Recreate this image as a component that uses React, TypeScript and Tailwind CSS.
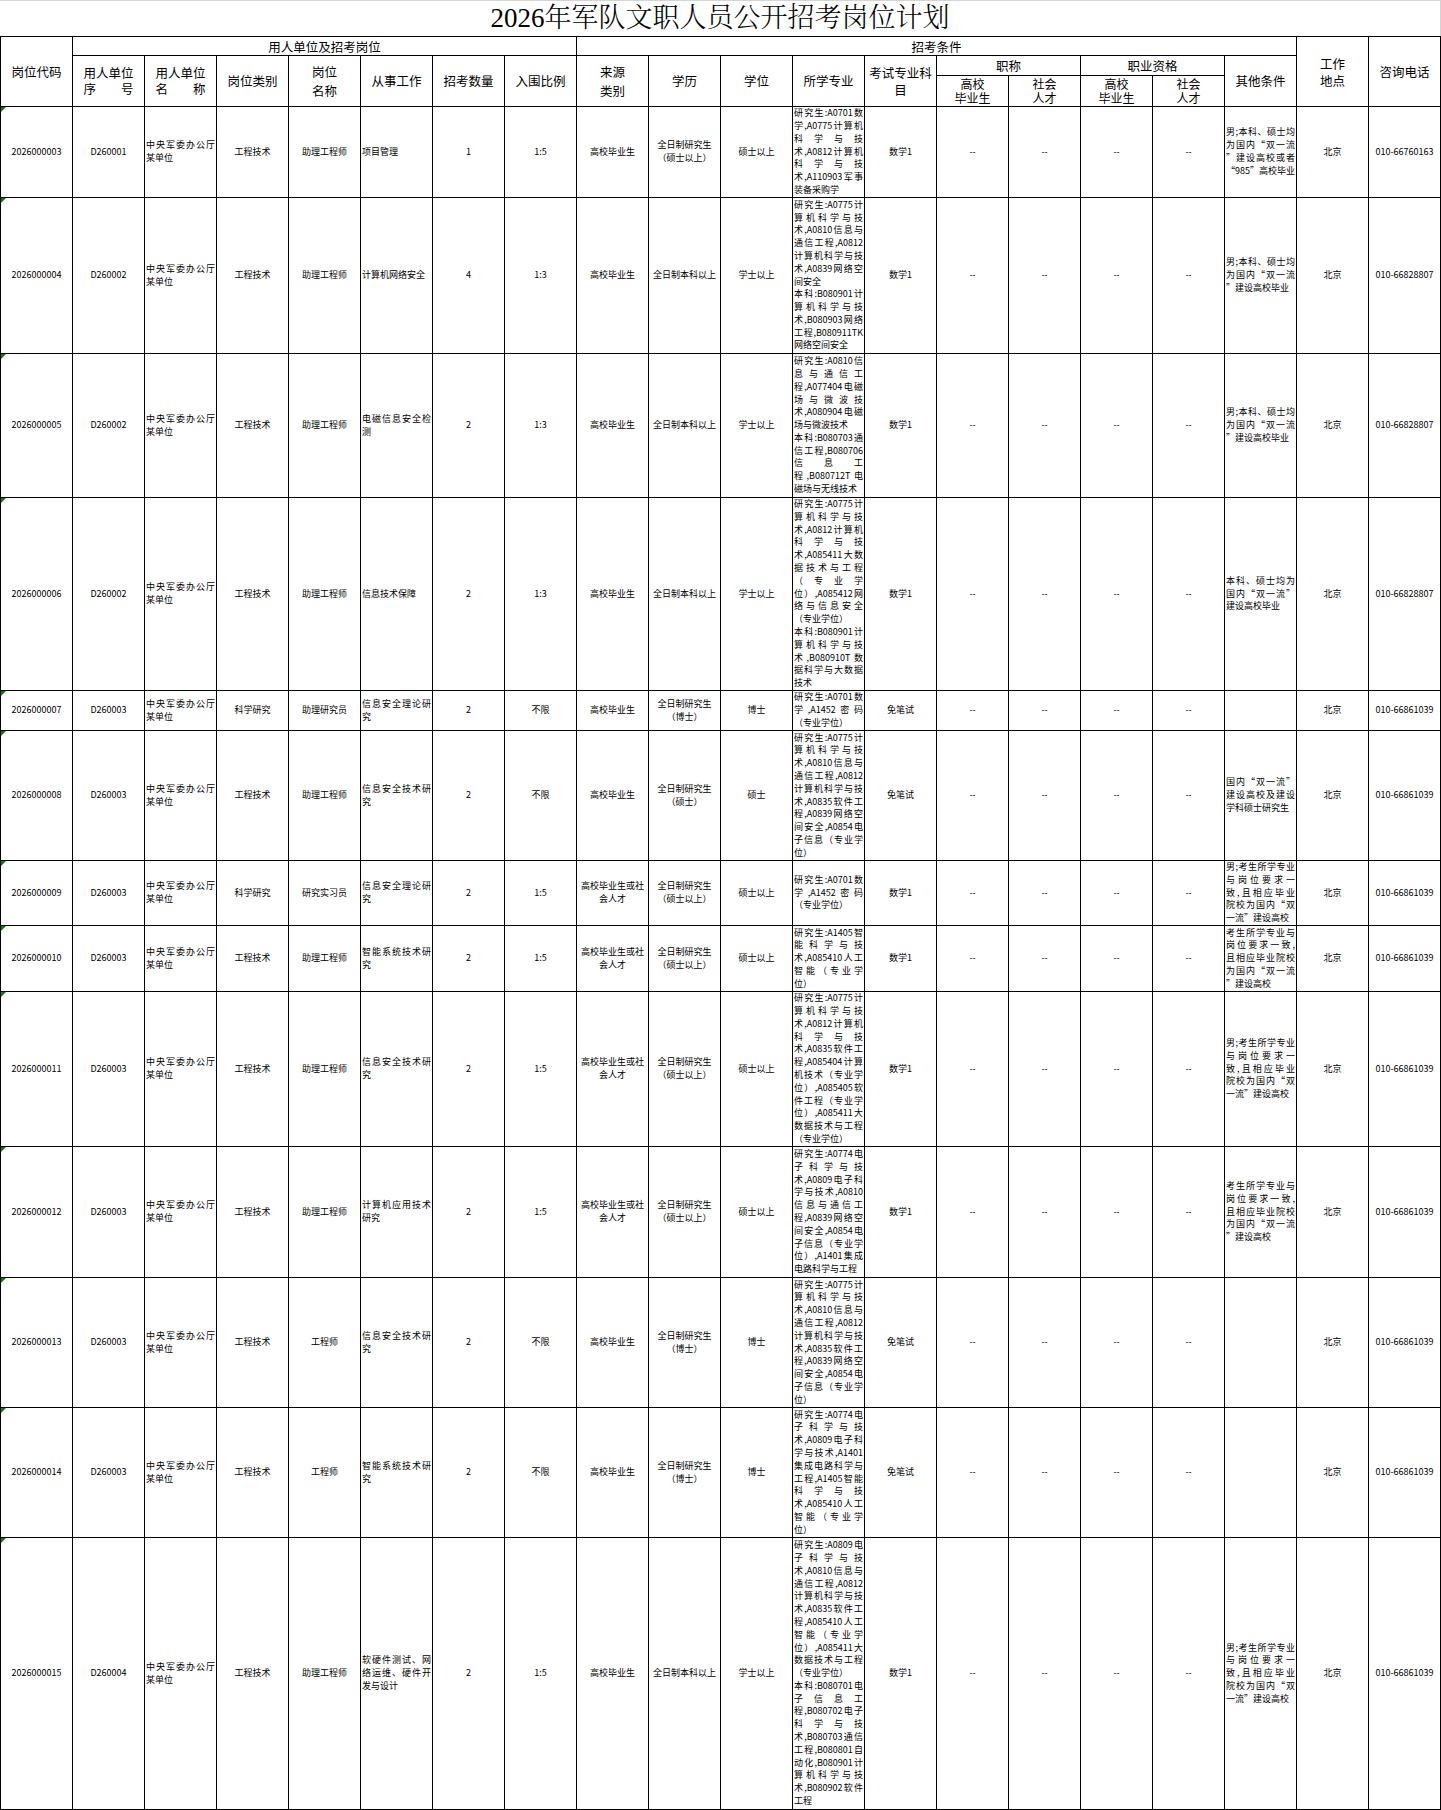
import React from "react";

type Row = {
  code: string;
  seq: string;
  kind: string;
  post: string;
  work: string[];
  num: string;
  ratio: string;
  source: string[];
  edu: string[];
  degree: string;
  major: string[][];
  exam: string;
  other: string[];
  phone: string;
};

const U = ["中央军委办公厅", "某单位"];
const E1 = ["全日制研究生", "（硕士以上）"];
const EB = ["全日制本科以上"];
const ED = ["全日制研究生", "（博士）"];
const EM = ["全日制研究生", "（硕士）"];
const S1 = ["高校毕业生"];
const S2 = ["高校毕业生或社", "会人才"];
const O2 = ["男;本科、硕士均", "为国内“双一流", "”建设高校毕业"];
const O7 = ["男;考生所学专业", "与岗位要求一", "致,且相应毕业", "院校为国内“双", "一流”建设高校"];
const O8 = ["考生所学专业与", "岗位要求一致,", "且相应毕业院校", "为国内“双一流", "”建设高校"];
const M6 = [
  [
    "研究生:A0775计",
    "算机科学与技",
    "术,A0810信息与",
    "通信工程,A0812",
    "计算机科学与技",
    "术,A0835软件工",
    "程,A0839网络空",
    "间安全,A0854电",
    "子信息（专业学",
    "位）",
  ],
];

const rows: Row[] = [
  {
    code: "2026000003", seq: "D260001", kind: "工程技术", post: "助理工程师", work: ["项目管理"],
    num: "1", ratio: "1:5", source: S1, edu: E1, degree: "硕士以上",
    major: [["研究生:A0701数", "学,A0775计算机", "科学与技", "术,A0812计算机", "科学与技", "术,A110903军事", "装备采购学"]],
    exam: "数学1", other: ["男;本科、硕士均", "为国内“双一流", "”建设高校或者", "“985”高校毕业"], phone: "010-66760163",
  },
  {
    code: "2026000004", seq: "D260002", kind: "工程技术", post: "助理工程师", work: ["计算机网络安全"],
    num: "4", ratio: "1:3", source: S1, edu: EB, degree: "学士以上",
    major: [
      ["研究生:A0775计", "算机科学与技", "术,A0810信息与", "通信工程,A0812", "计算机科学与技", "术,A0839网络空", "间安全"],
      ["本科:B080901计", "算机科学与技", "术,B080903网络", "工程,B080911TK", "网络空间安全"],
    ],
    exam: "数学1", other: O2, phone: "010-66828807",
  },
  {
    code: "2026000005", seq: "D260002", kind: "工程技术", post: "助理工程师", work: ["电磁信息安全检", "测"],
    num: "2", ratio: "1:3", source: S1, edu: EB, degree: "学士以上",
    major: [
      ["研究生:A0810信", "息与通信工", "程,A077404电磁", "场与微波技", "术,A080904电磁", "场与微波技术"],
      ["本科:B080703通", "信工程,B080706", "信息工", "程,B080712T电", "磁场与无线技术"],
    ],
    exam: "数学1", other: O2, phone: "010-66828807",
  },
  {
    code: "2026000006", seq: "D260002", kind: "工程技术", post: "助理工程师", work: ["信息技术保障"],
    num: "2", ratio: "1:3", source: S1, edu: EB, degree: "学士以上",
    major: [
      ["研究生:A0775计", "算机科学与技", "术,A0812计算机", "科学与技", "术,A085411大数", "据技术与工程", "（专业学", "位）,A085412网", "络与信息安全", "（专业学位）"],
      ["本科:B080901计", "算机科学与技", "术,B080910T数", "据科学与大数据", "技术"],
    ],
    exam: "数学1", other: ["本科、硕士均为", "国内“双一流”", "建设高校毕业"], phone: "010-66828807",
  },
  {
    code: "2026000007", seq: "D260003", kind: "科学研究", post: "助理研究员", work: ["信息安全理论研", "究"],
    num: "2", ratio: "不限", source: S1, edu: ED, degree: "博士",
    major: [["研究生:A0701数", "学,A1452密码", "（专业学位）"]],
    exam: "免笔试", other: [], phone: "010-66861039",
  },
  {
    code: "2026000008", seq: "D260003", kind: "工程技术", post: "助理工程师", work: ["信息安全技术研", "究"],
    num: "2", ratio: "不限", source: S1, edu: EM, degree: "硕士",
    major: M6,
    exam: "免笔试", other: ["国内“双一流”", "建设高校及建设", "学科硕士研究生"], phone: "010-66861039",
  },
  {
    code: "2026000009", seq: "D260003", kind: "科学研究", post: "研究实习员", work: ["信息安全理论研", "究"],
    num: "2", ratio: "1:5", source: S2, edu: E1, degree: "硕士以上",
    major: [["研究生:A0701数", "学,A1452密码", "（专业学位）"]],
    exam: "数学1", other: O7, phone: "010-66861039",
  },
  {
    code: "2026000010", seq: "D260003", kind: "工程技术", post: "助理工程师", work: ["智能系统技术研", "究"],
    num: "2", ratio: "1:5", source: S2, edu: E1, degree: "硕士以上",
    major: [["研究生:A1405智", "能科学与技", "术,A085410人工", "智能（专业学", "位）"]],
    exam: "数学1", other: O8, phone: "010-66861039",
  },
  {
    code: "2026000011", seq: "D260003", kind: "工程技术", post: "助理工程师", work: ["信息安全技术研", "究"],
    num: "2", ratio: "1:5", source: S2, edu: E1, degree: "硕士以上",
    major: [["研究生:A0775计", "算机科学与技", "术,A0812计算机", "科学与技", "术,A0835软件工", "程,A085404计算", "机技术（专业学", "位）,A085405软", "件工程（专业学", "位）,A085411大", "数据技术与工程", "（专业学位）"]],
    exam: "数学1", other: O7, phone: "010-66861039",
  },
  {
    code: "2026000012", seq: "D260003", kind: "工程技术", post: "助理工程师", work: ["计算机应用技术", "研究"],
    num: "2", ratio: "1:5", source: S2, edu: E1, degree: "硕士以上",
    major: [["研究生:A0774电", "子科学与技", "术,A0809电子科", "学与技术,A0810", "信息与通信工", "程,A0839网络空", "间安全,A0854电", "子信息（专业学", "位）,A1401集成", "电路科学与工程"]],
    exam: "数学1", other: O8, phone: "010-66861039",
  },
  {
    code: "2026000013", seq: "D260003", kind: "工程技术", post: "工程师", work: ["信息安全技术研", "究"],
    num: "2", ratio: "不限", source: S1, edu: ED, degree: "博士",
    major: M6,
    exam: "免笔试", other: [], phone: "010-66861039",
  },
  {
    code: "2026000014", seq: "D260003", kind: "工程技术", post: "工程师", work: ["智能系统技术研", "究"],
    num: "2", ratio: "不限", source: S1, edu: ED, degree: "博士",
    major: [["研究生:A0774电", "子科学与技", "术,A0809电子科", "学与技术,A1401", "集成电路科学与", "工程,A1405智能", "科学与技", "术,A085410人工", "智能（专业学", "位）"]],
    exam: "免笔试", other: [], phone: "010-66861039",
  },
  {
    code: "2026000015", seq: "D260004", kind: "工程技术", post: "助理工程师", work: ["软硬件测试、网", "络运维、硬件开", "发与设计"],
    num: "2", ratio: "1:5", source: S1, edu: EB, degree: "学士以上",
    major: [
      ["研究生:A0809电", "子科学与技", "术,A0810信息与", "通信工程,A0812", "计算机科学与技", "术,A0835软件工", "程,A085410人工", "智能（专业学", "位）,A085411大", "数据技术与工程", "（专业学位）"],
      ["本科:B080701电", "子信息工", "程,B080702电子", "科学与技", "术,B080703通信", "工程,B080801自", "动化,B080901计", "算机科学与技", "术,B080902软件", "工程"],
    ],
    exam: "数学1", other: O7, phone: "010-66861039",
  },
];

const B = "border-r border-b border-black";
const J = "text-justify [text-align-last:justify]";
const L = "text-left";

function Paras({ paras }: { paras: string[][] }) {
  return (
    <>
      {paras.map((p, i) =>
        p.map((line, j) => (
          <div key={i + "-" + j} className={j < p.length - 1 ? J : L}>
            {line}
          </div>
        ))
      )}
    </>
  );
}

function Center({ lines }: { lines: string[] }) {
  return (
    <div className={`${B} flex flex-col items-center justify-center text-center px-[1px] overflow-hidden`}>
      {lines.map((l, i) => (
        <div key={i} className="whitespace-nowrap">
          {l}
        </div>
      ))}
    </div>
  );
}

function LeftCell({ paras }: { paras: string[][] }) {
  return (
    <div className={`${B} flex flex-col justify-center pl-[1px] pr-[1px] overflow-hidden`}>
      <Paras paras={paras} />
    </div>
  );
}

function HeadLines({ lines, className = "" }: { lines: string[]; className?: string }) {
  return (
    <div className={`${B} flex flex-col items-center justify-center text-center overflow-hidden ${className}`}>
      {lines.map((l, i) => (
        <div key={i} className="whitespace-nowrap">
          {l}
        </div>
      ))}
    </div>
  );
}

function DataRow({ r }: { r: Row }) {
  return (
    <>
      <div className={`${B} relative flex items-center justify-center`}>
        <span className="absolute left-0 top-0 h-0 w-0 border-t-[5px] border-r-[5px] border-t-[#0a7a0a] border-r-transparent" />
        {r.code}
      </div>
      <Center lines={[r.seq]} />
      <LeftCell paras={[U]} />
      <Center lines={[r.kind]} />
      <Center lines={[r.post]} />
      <LeftCell paras={[r.work]} />
      <Center lines={[r.num]} />
      <Center lines={[r.ratio]} />
      <Center lines={r.source} />
      <Center lines={r.edu} />
      <Center lines={[r.degree]} />
      <LeftCell paras={r.major} />
      <Center lines={[r.exam]} />
      <Center lines={["--"]} />
      <Center lines={["--"]} />
      <Center lines={["--"]} />
      <Center lines={["--"]} />
      <LeftCell paras={r.other.length ? [r.other] : []} />
      <Center lines={["北京"]} />
      <Center lines={[r.phone]} />
    </>
  );
}

export default function App() {
  return (
    <div className="w-[1441px] bg-white text-black font-['Noto_Sans_CJK_SC','Noto_Sans',sans-serif]">
      <div className="h-[36px] flex items-center justify-center border-t border-r border-[#d4d4d4] text-[27px] leading-none font-light font-['Liberation_Serif','Noto_Serif_CJK_SC','Noto_Sans_CJK_SC',serif]">
        2026年军队文职人员公开招考岗位计划
      </div>
      <div className="grid w-[1441px] grid-cols-[repeat(20,72px)] grid-rows-[19px_20px_31px_91px_156px_144px_193px_40px_130px_65px_66px_155px_131px_130px_130px_272px] border-l border-t border-black">
        {/* header */}
        <div className="contents text-[12.5px] leading-[16px]">
          <HeadLines lines={["岗位代码"]} className="col-start-1 row-start-1 row-span-3 text-[12.5px]" />
          <HeadLines lines={["用人单位及招考岗位"]} className="col-start-2 col-span-7 row-start-1 text-[12.5px] leading-[15px]" />
          <HeadLines lines={["招考条件"]} className="col-start-9 col-span-10 row-start-1 text-[12.5px] leading-[15px]" />
          <HeadLines lines={["工作", "地点"]} className="col-start-19 row-start-1 row-span-3 text-[12.5px] leading-[17px]" />
          <HeadLines lines={["咨询电话"]} className="col-start-20 row-start-1 row-span-3 text-[12.5px]" />

          <div className={`${B} col-start-2 row-start-2 row-span-2 flex items-center justify-center text-[12.5px] leading-[16px]`}>
            <div className="w-[50px]">
              <div className={J}>用人单位</div>
              <div className={J}>序号</div>
            </div>
          </div>
          <div className={`${B} col-start-3 row-start-2 row-span-2 flex items-center justify-center text-[12.5px] leading-[16px]`}>
            <div className="w-[50px]">
              <div className={J}>用人单位</div>
              <div className={J}>名称</div>
            </div>
          </div>
          <HeadLines lines={["岗位类别"]} className="col-start-4 row-start-2 row-span-2 text-[12.5px]" />
          <HeadLines lines={["岗位", "名称"]} className="col-start-5 row-start-2 row-span-2 text-[12.5px] leading-[19px]" />
          <HeadLines lines={["从事工作"]} className="col-start-6 row-start-2 row-span-2 text-[12.5px]" />
          <HeadLines lines={["招考数量"]} className="col-start-7 row-start-2 row-span-2 text-[12.5px]" />
          <HeadLines lines={["入围比例"]} className="col-start-8 row-start-2 row-span-2 text-[12.5px]" />
          <HeadLines lines={["来源", "类别"]} className="col-start-9 row-start-2 row-span-2 text-[12.5px] leading-[19px]" />
          <HeadLines lines={["学历"]} className="col-start-10 row-start-2 row-span-2 text-[12.5px]" />
          <HeadLines lines={["学位"]} className="col-start-11 row-start-2 row-span-2 text-[12.5px]" />
          <HeadLines lines={["所学专业"]} className="col-start-12 row-start-2 row-span-2 text-[12.5px]" />
          <HeadLines lines={["考试专业科", "目"]} className="col-start-13 row-start-2 row-span-2 text-[12.5px] leading-[17px]" />
          <HeadLines lines={["职称"]} className="col-start-14 col-span-2 row-start-2 text-[12.5px] leading-[15px]" />
          <HeadLines lines={["职业资格"]} className="col-start-16 col-span-2 row-start-2 text-[12.5px] leading-[15px]" />
          <HeadLines lines={["其他条件"]} className="col-start-18 row-start-2 row-span-2 text-[12.5px]" />
          <HeadLines lines={["高校", "毕业生"]} className="col-start-14 row-start-3 text-[12px] leading-[14px]" />
          <HeadLines lines={["社会", "人才"]} className="col-start-15 row-start-3 text-[12px] leading-[14px]" />
          <HeadLines lines={["高校", "毕业生"]} className="col-start-16 row-start-3 text-[12px] leading-[14px]" />
          <HeadLines lines={["社会", "人才"]} className="col-start-17 row-start-3 text-[12px] leading-[14px]" />
        </div>
        {/* data */}
        <div className="contents text-[9px] leading-[12.8px]">
          {rows.map((r) => (
            <DataRow key={r.code} r={r} />
          ))}
        </div>
      </div>
    </div>
  );
}
